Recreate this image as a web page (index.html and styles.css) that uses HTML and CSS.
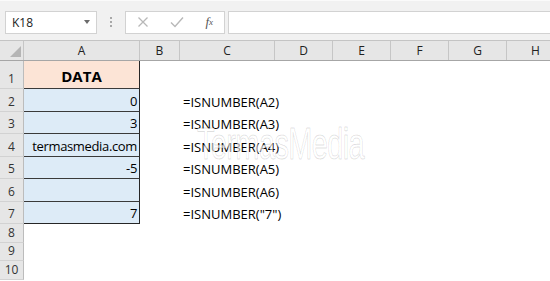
FILE: index.html
```html
<!doctype html>
<html lang="en">

<head>
    <meta charset="UTF-8">
    <title>ISNUMBER</title>
    <link rel="stylesheet" href="styles.css">
</head>

<body>
    <div class="toolbar">
        <div class="namebox">
            <span>K18</span>
            <i class="caret"></i>
        </div>
        <div class="grip"><i></i><i></i><i></i></div>
        <div class="fxbtns">
            <span class="btn">
                <svg width="12" height="12" viewBox="0 0 12 12"><path d="M1.5 1.5 L10.5 10.5 M10.5 1.5 L1.5 10.5" stroke="#b8b8b8" stroke-width="1.3" fill="none" /></svg>
            </span>
            <span class="btn">
                <svg width="14" height="12" viewBox="0 0 14 12"><path d="M1 6.5 L5 10.5 L13 1.5" stroke="#b8b8b8" stroke-width="1.4" fill="none" /></svg>
            </span>
            <span class="btn fx">f<sub>x</sub></span>
        </div>
        <div class="formula"></div>
    </div>

    <div class="sheet">
        <div class="row head">
            <div class="corner"><i></i></div>
            <div class="ch">A</div>
            <div class="ch">B</div>
            <div class="ch">C</div>
            <div class="ch">D</div>
            <div class="ch">E</div>
            <div class="ch">F</div>
            <div class="ch">G</div>
            <div class="ch">H</div>
        </div>
        <div class="row r1">
            <div class="rh">1</div>
            <div class="cell title">DATA</div>
            <div></div><div></div><div></div><div></div><div></div><div></div><div></div>
        </div>
        <div class="row r23">
            <div class="rh">2</div>
            <div class="cell val">0</div>
            <div></div><div class="f">=ISNUMBER(A2)</div>
        </div>
        <div class="row r22">
            <div class="rh">3</div>
            <div class="cell val">3</div>
            <div></div><div class="f">=ISNUMBER(A3)</div>
        </div>
        <div class="row r23">
            <div class="rh">4</div>
            <div class="cell val">termasmedia.com</div>
            <div></div><div class="f">=ISNUMBER(A4)</div>
        </div>
        <div class="row r22">
            <div class="rh">5</div>
            <div class="cell val">-5</div>
            <div></div><div class="f">=ISNUMBER(A5)</div>
        </div>
        <div class="row r23">
            <div class="rh">6</div>
            <div class="cell val"></div>
            <div></div><div class="f">=ISNUMBER(A6)</div>
        </div>
        <div class="row r22">
            <div class="rh">7</div>
            <div class="cell val last">7</div>
            <div></div><div class="f">=ISNUMBER("7")</div>
        </div>
        <div class="row r19">
            <div class="rh">8</div>
        </div>
        <div class="row r18">
            <div class="rh">9</div>
        </div>
        <div class="row r19">
            <div class="rh">10</div>
        </div>

        <div class="mark">TermasMedia</div>
    </div>
</body>

</html>
```

FILE: styles.css
```css
* {
    margin: 0;
    padding: 0;
    box-sizing: border-box;
}

body {
    width: 550px;
    height: 281px;
    overflow: hidden;
    background: #fff;
    font-family: "Open Sans", "Liberation Sans", sans-serif;
    color: #000;
}

/* barre de formule */
.toolbar {
    display: flex;
    align-items: center;
    height: 40px;
    padding: 10px 0 7px 5px;
    background: #f1f1f1;
    border-top: 1px solid #fafafa;
}

.namebox {
    display: flex;
    align-items: center;
    justify-content: space-between;
    width: 92px;
    height: 23px;
    padding: 0 6px 0 6px;
    background: #fff;
    border: 1px solid #d2d2d2;
    font-size: 12px;
    color: #222;
}

.caret {
    width: 0;
    height: 0;
    border-left: 3.5px solid transparent;
    border-right: 3.5px solid transparent;
    border-top: 4px solid #6b6b6b;
}

.grip {
    display: flex;
    flex-direction: column;
    gap: 2px;
    width: 28px;
    align-items: center;
}

.grip i {
    width: 2px;
    height: 2px;
    background: #a8a8a8;
}

.fxbtns {
    display: flex;
    align-items: center;
    justify-content: space-between;
    width: 100px;
    height: 23px;
    padding: 0 11px 0 11px;
    background: #fff;
    border: 1px solid #d2d2d2;
}

.btn {
    display: flex;
    align-items: center;
}

.fx {
    font-family: "Liberation Serif", serif;
    font-style: italic;
    font-size: 13px;
    color: #555;
}

.fx sub {
    font-size: 9px;
    vertical-align: -1px;
}

.formula {
    flex: 1;
    height: 23px;
    margin-left: 3px;
    background: #fff;
    border: 1px solid #d2d2d2;
    border-right: none;
}

/* feuille */
.sheet {
    position: relative;
}

.row {
    display: grid;
    grid-template-columns: 24px 116px 40px 95px repeat(5, 58px);
}

.head {
    height: 21px;
    background: #e6e6e6;
    border-top: 1px solid #c4c4c4;
    border-bottom: 1px solid #a6a6a6;
}

.corner {
    position: relative;
    border-right: 1px solid #c6c6c6;
}

.corner i {
    position: absolute;
    right: 2px;
    bottom: 3px;
    width: 0;
    height: 0;
    border-left: 11px solid transparent;
    border-bottom: 11px solid #b5b5b5;
}

.ch {
    display: flex;
    align-items: center;
    justify-content: center;
    border-right: 1px solid #c6c6c6;
    font-size: 12px;
    color: #222;
}

.r1 { height: 28px; }
.r23 { height: 23px; }
.r22 { height: 22px; }
.r19 { height: 19px; }
.r18 { height: 18px; }

.rh {
    display: flex;
    align-items: flex-end;
    justify-content: center;
    padding-bottom: 1px;
    background: #e6e6e6;
    border-right: 1px solid #bcbcbc;
    border-bottom: 1px solid #d2d2d2;
    font-size: 12px;
    line-height: 16px;
    color: #333;
}

.cell {
    display: flex;
    align-items: flex-end;
    border-right: 1px solid #262626;
    border-bottom: 1px solid #3a3a3a;
    font-size: 13px;
    line-height: 19px;
}

.title {
    justify-content: center;
    padding-bottom: 2px;
    background: #fce4d6;
    font-weight: bold;
    font-size: 15px;
}

.val {
    justify-content: flex-end;
    padding-right: 2px;
    background: #ddebf7;
    letter-spacing: -0.35px;
}

.last {
    border-bottom-color: #262626;
}

.f {
    display: flex;
    align-items: flex-end;
    padding-left: 3px;
    white-space: nowrap;
    font-size: 13px;
    line-height: 19px;
}

.mark {
    position: absolute;
    left: 197px;
    top: 82px;
    font-family: "Liberation Sans", sans-serif;
    font-size: 44px;
    line-height: 1;
    letter-spacing: -1px;
    transform: scaleX(0.66);
    transform-origin: left top;
    color: rgba(255, 255, 255, 0.6);
    -webkit-text-stroke: 1px rgba(0, 0, 0, 0.13);
    pointer-events: none;
}
```
